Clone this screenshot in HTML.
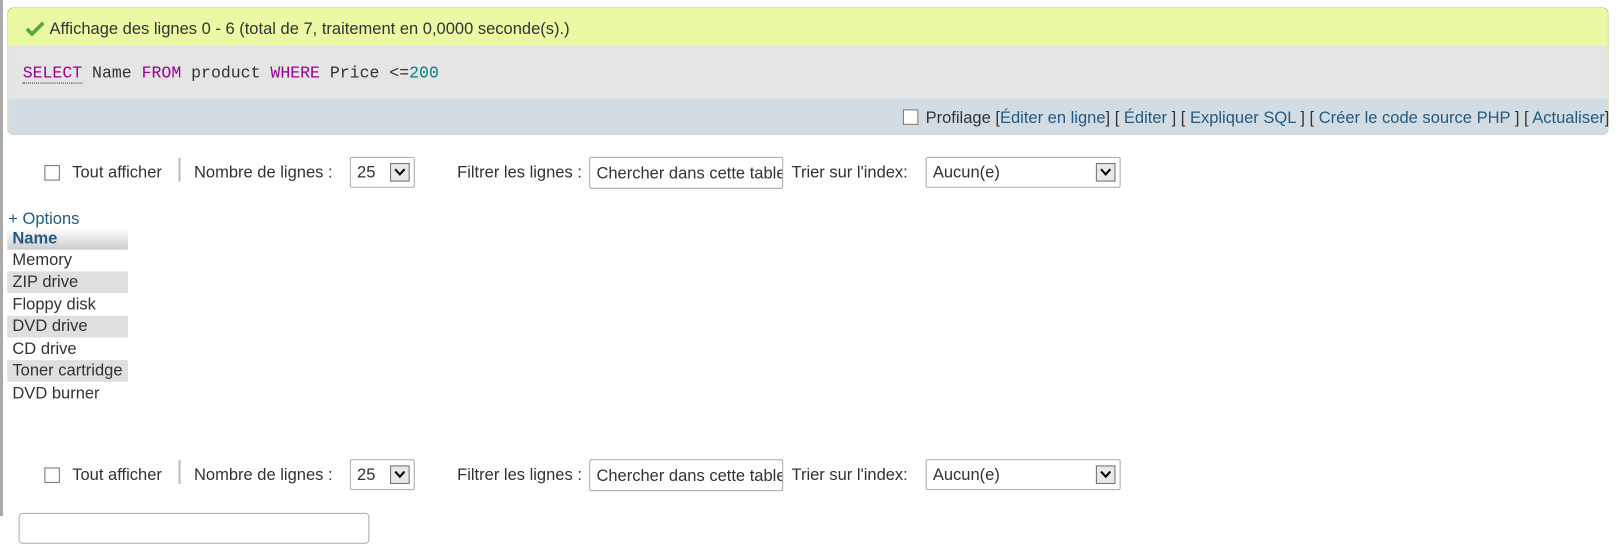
<!DOCTYPE html>
<html><head><meta charset="utf-8"><style>
body{margin:0;width:1618px;height:516px;overflow:hidden;background:#fff;font-family:"Liberation Sans",Arial,sans-serif;font-size:16px;color:#333;position:relative}
#w{position:absolute;left:0;top:0;width:1568px;height:500px;transform:scale(1.0319);transform-origin:0 0}
.a{position:absolute;white-space:nowrap}
.box{position:absolute;left:7px;top:7px;width:1552px;height:124px;border-radius:6px;overflow:hidden;border:1px solid #b8d77a;border-bottom:none;box-sizing:border-box}
.g{position:absolute;left:0;top:0;right:0;height:36px;background:#ebf8a4}
.s{position:absolute;left:0;top:36px;right:0;height:52px;background:#e5e5e5}
.b{position:absolute;left:0;top:88px;right:0;height:36px;background:#d3dce3}
.mono{font-family:"Liberation Mono",monospace;font-size:16px}
.kw{color:#990099}
a,.ln{color:#235a81;text-decoration:none}
.cb{position:absolute;width:15px;height:15px;border:1px solid #767676;background:#fff;box-sizing:border-box}
.sel{position:absolute;border:1px solid #aaa;border-radius:2px;background:#fff;height:30px;box-sizing:border-box}
.arr{position:absolute;right:4px;top:5px;width:19px;height:18px;border:1px solid #707070;background:#e8e8e8;box-sizing:border-box}
.inp{position:absolute;border:1px solid #aaa;border-radius:2px;height:31px;width:188px;box-sizing:border-box;overflow:hidden;padding:6px 6px;white-space:nowrap}
.row{position:absolute;left:7px;width:117px;height:21px;padding-left:5px;box-sizing:border-box;line-height:22px;font-size:16px;white-space:nowrap;overflow:visible}
</style></head><body><div id="w">
<div class="box"><div class="g"></div><div class="s"></div><div class="b"></div></div>
<svg class="a" style="left:25px;top:21px" width="18" height="14" viewBox="0 0 18 14"><path d="M1 7 L6 12 L17 1" stroke="#5aa830" stroke-width="3.5" fill="none"/></svg>
<div class="a" style="left:48px;top:20px">Affichage des lignes 0 - 6 (total de 7, traitement en 0,0000 seconde(s).)</div>
<div class="a mono" style="left:22px;top:62px"><span class="kw" style="border-bottom:1px dotted #333">SELECT</span> Name <span class="kw">FROM</span> product <span class="kw">WHERE</span> Price &lt;=<span style="color:#008080">200</span></div>
<div class="cb" style="left:875px;top:106px"></div>
<div class="a" style="left:897px;top:106px">Profilage [<a>Éditer en ligne</a>] [ <a>Éditer</a> ] [ <a>Expliquer SQL</a> ] [ <a>Créer le code source PHP</a> ] [ <a>Actualiser</a>]</div>

<div class="cb" style="left:43px;top:160px"></div>
<div class="a" style="left:70px;top:159px">Tout afficher</div>
<div class="a" style="left:173px;top:153px;width:2px;height:23px;background:#bbb"></div>
<div class="a" style="left:188px;top:159px">Nombre de lignes :</div>
<div class="sel" style="left:339px;top:152px;width:63px"><span class="a" style="left:6px;top:6px">25</span><div class="arr"><svg width="17" height="16"><path d="M4 5 L8.5 10 L13 5" stroke="#000" stroke-width="2" fill="none"/></svg></div></div>
<div class="a" style="left:443px;top:159px">Filtrer les lignes :</div>
<div class="inp" style="left:571px;top:152px;padding-top:7px">Chercher dans cette table</div>
<div class="a" style="left:767px;top:159px">Trier sur l'index:</div>
<div class="sel" style="left:897px;top:152px;width:189px"><span class="a" style="left:6px;top:6px">Aucun(e)</span><div class="arr"><svg width="17" height="16"><path d="M4 5 L8.5 10 L13 5" stroke="#000" stroke-width="2" fill="none"/></svg></div></div>

<div class="a ln" style="left:8px;top:204px">+ Options</div>
<div class="row" style="top:221px;background:linear-gradient(#fff,#ccc);font-weight:bold;color:#235a81">Name</div>
<div class="row" style="top:242px">Memory</div>
<div class="row" style="top:263px;background:#dfdfdf">ZIP drive</div>
<div class="row" style="top:285px">Floppy disk</div>
<div class="row" style="top:306px;background:#dfdfdf">DVD drive</div>
<div class="row" style="top:328px">CD drive</div>
<div class="row" style="top:349px;background:#dfdfdf">Toner cartridge</div>
<div class="row" style="top:371px">DVD burner</div>

<div class="cb" style="left:43px;top:453px"></div>
<div class="a" style="left:70px;top:452px">Tout afficher</div>
<div class="a" style="left:173px;top:446px;width:2px;height:23px;background:#bbb"></div>
<div class="a" style="left:188px;top:452px">Nombre de lignes :</div>
<div class="sel" style="left:339px;top:445px;width:63px"><span class="a" style="left:6px;top:6px">25</span><div class="arr"><svg width="17" height="16"><path d="M4 5 L8.5 10 L13 5" stroke="#000" stroke-width="2" fill="none"/></svg></div></div>
<div class="a" style="left:443px;top:452px">Filtrer les lignes :</div>
<div class="inp" style="left:571px;top:445px;padding-top:7px">Chercher dans cette table</div>
<div class="a" style="left:767px;top:452px">Trier sur l'index:</div>
<div class="sel" style="left:897px;top:445px;width:189px"><span class="a" style="left:6px;top:6px">Aucun(e)</span><div class="arr"><svg width="17" height="16"><path d="M4 5 L8.5 10 L13 5" stroke="#000" stroke-width="2" fill="none"/></svg></div></div>

<div class="a" style="left:18px;top:497px;width:340px;height:30px;border:1px solid #aaa;border-radius:4px;box-sizing:border-box"></div>
</div>
<div style="position:absolute;left:0;top:0;width:3px;height:516px;background:#aaa"></div>
</body></html>
